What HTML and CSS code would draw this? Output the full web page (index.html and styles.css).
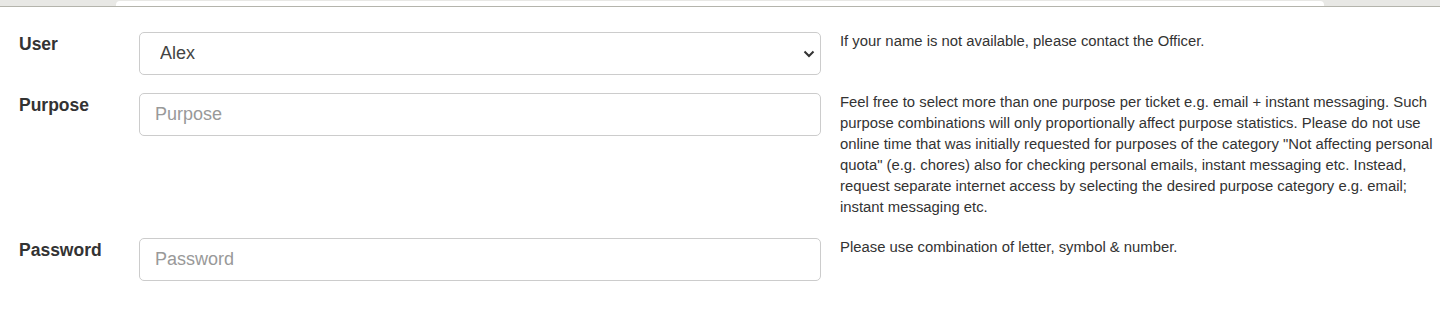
FILE: index.html
```html
<!DOCTYPE html>
<html>
<head>
<meta charset="utf-8">
<link rel="stylesheet" href="styles.css">
</head>
<body>
<div class="topbar"><div class="tab"></div></div>
<form class="form">
  <div class="row">
    <label class="label">User</label>
    <div class="field">
      <div class="select-wrap">
        <select class="control select"><option>Alex</option></select>
        <svg class="chev" width="12" height="8" viewBox="0 0 12 8"><path d="M1.5 1.5 L6 6 L10.5 1.5" fill="none" stroke="#333" stroke-width="2"/></svg>
      </div>
    </div>
    <p class="help">If your name is not available, please contact the Officer.</p>
  </div>
  <div class="row">
    <label class="label">Purpose</label>
    <div class="field"><input class="control" type="text" placeholder="Purpose"></div>
    <p class="help">Feel free to select more than one purpose per ticket e.g. email + instant messaging. Such purpose combinations will only proportionally affect purpose statistics. Please do not use online time that was initially requested for purposes of the category "Not affecting personal quota" (e.g. chores) also for checking personal emails, instant messaging etc. Instead, request separate internet access by selecting the desired purpose category e.g. email; instant messaging etc.</p>
  </div>
  <div class="row">
    <label class="label">Password</label>
    <div class="field"><input class="control" type="password" placeholder="Password"></div>
    <p class="help">Please use combination of letter, symbol &amp; number.</p>
  </div>
</form>
</body>
</html>
```
FILE: styles.css
```css
html, body { margin: 0; padding: 0; background: #fff; }
body { font-family: "Liberation Sans", Arial, sans-serif; color: #333; }
.topbar {
  height: 6px;
  background: #e8e8e5;
  border-bottom: 1px solid #b4b4ac;
  display: flex;
  padding: 0 116px;
}
.tab {
  flex: 1;
  margin-top: 1px;
  background: #fff;
  border-radius: 4px 4px 0 0;
}
.form { padding: 25px 0 0 19px; }
.row {
  display: flex;
  align-items: flex-start;
  margin-bottom: 18px;
}
.label {
  width: 120px;
  flex: none;
  font-weight: bold;
  font-size: 17.5px;
  line-height: 20px;
  padding-top: 2px;
}
.field { width: 682px; flex: none; }
.select-wrap { position: relative; }
.control {
  display: block;
  box-sizing: border-box;
  width: 100%;
  height: 43px;
  border: 1px solid #ccc;
  border-radius: 5px;
  background: #fff;
  font-family: "Liberation Sans", Arial, sans-serif;
  font-size: 18px;
  color: #555;
  padding: 0 15px;
  margin: 0;
  outline: none;
}
.control::placeholder { color: #999; }
.select { appearance: none; -webkit-appearance: none; padding-left: 20px; padding-bottom: 1px; color: #444; }
.chev { position: absolute; right: 6px; top: 18px; pointer-events: none; }
.help {
  margin: -1px 0 0 19px;
  padding-bottom: 2px;
  width: 600px;
  font-size: 14.85px;
  line-height: 21px;
  color: #333;
}
```
